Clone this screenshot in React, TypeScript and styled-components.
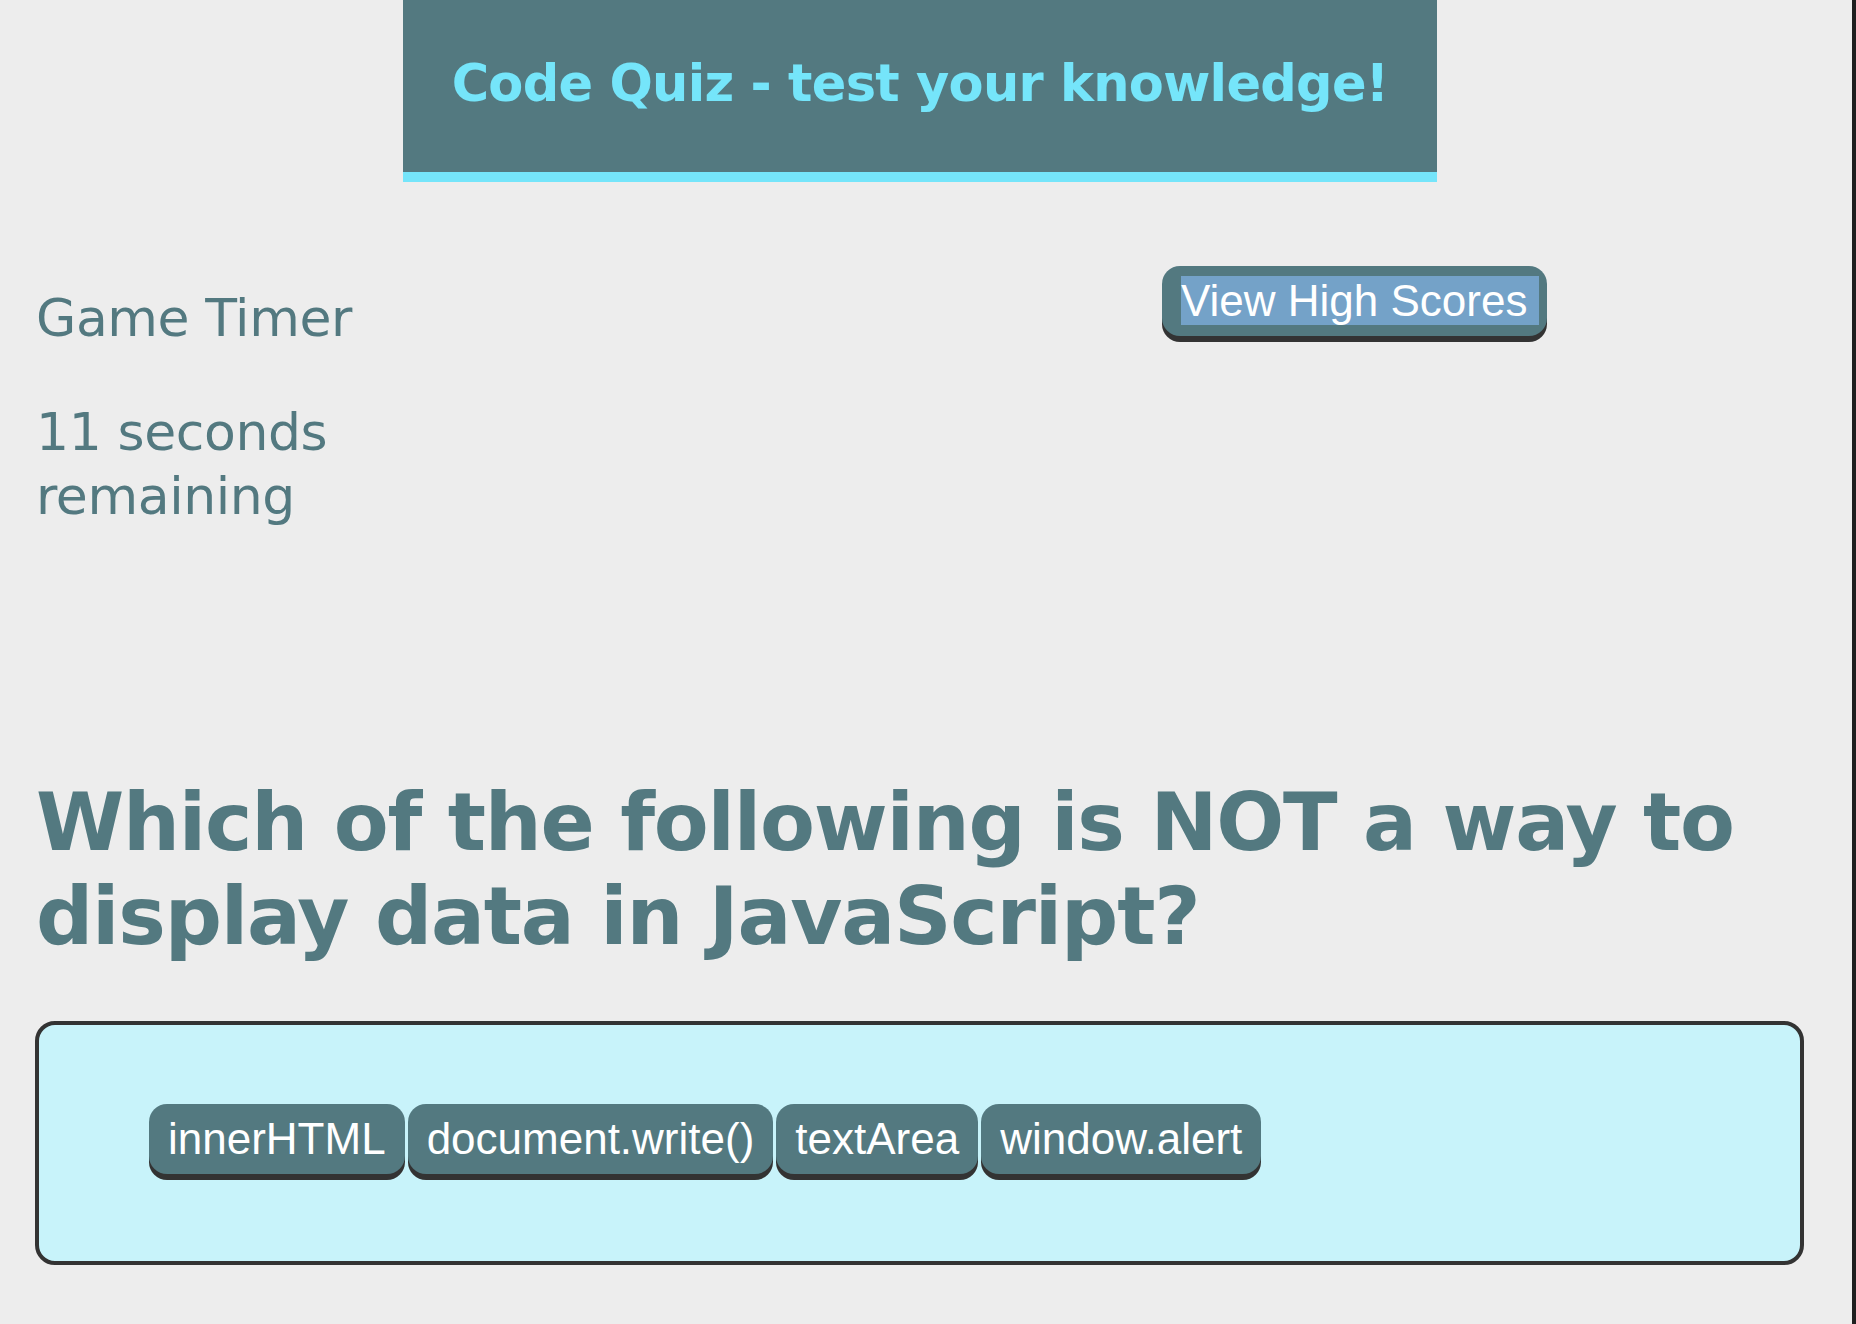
import React from "react";
import styled, { createGlobalStyle } from "styled-components";

const teal = "#537980";
const cyan = "#75e5fa";

const GlobalStyle = createGlobalStyle`
  html {
    background: linear-gradient(to right, #ededed calc(100% - 4px), #1f1f1f 0);
    min-height: 100%;
  }
  body {
    margin: 0;
    background: transparent;
    font-family: "DejaVu Sans", Verdana, sans-serif;
  }
`;

const Page = styled.div`
  width: 1840px;
  padding-bottom: 60px;
`;

const Header = styled.header`
  width: 1034px;
  height: 168px;
  margin: 0 auto;
  background: ${teal};
  border-bottom: 10px solid ${cyan};
  display: flex;
  align-items: center;
  justify-content: center;
  padding-bottom: 4px;
  box-sizing: content-box;
`;

const Title = styled.h1`
  margin: 0;
  color: ${cyan};
  font-family: "DejaVu Sans", Verdana, sans-serif;
  font-weight: bold;
  font-size: 51px;
  letter-spacing: -0.7px;
  line-height: 62px;
`;

const TopRow = styled.section`
  display: grid;
  grid-template-columns: 1126px auto;
  align-items: start;
  padding: 0 36px;
  margin-top: 84px;
`;

const TimerBox = styled.div`
  max-width: 460px;
  margin-top: 20px;
  color: ${teal};
`;

const TimerText = styled.p<{ spaced?: boolean }>`
  margin: ${props => (props.spaced ? "50px" : "0")} 0 0;
  font-size: 52px;
  letter-spacing: -0.4px;
  line-height: 64px;
`;

const Selection = styled.span`
  background: #74a2c8;
  padding-right: 12px;
`;

const PillButton = styled.button`
  font-family: "Liberation Sans", Arial, sans-serif;
  font-size: 44px;
  line-height: 50px;
  color: #fff;
  background: ${teal};
  border: 0;
  border-radius: 18px;
  box-shadow: 0 6px 0 #333;
  padding: 10px 19px;
  margin: 0;
  white-space: nowrap;
  cursor: pointer;
`;

const ScoresButton = styled(PillButton)`
  padding: 10px 8px 10px 19px;
  justify-self: start;
`;

const Question = styled.h2`
  margin: 248px 0 57px;
  padding: 0 36px;
  color: ${teal};
  font-family: "DejaVu Sans", Verdana, sans-serif;
  font-weight: bold;
  font-size: 80px;
  letter-spacing: -1.2px;
  line-height: 94px;
`;

const AnswerBox = styled.div`
  margin: 0 36px 0 35px;
  padding: 79px 40px 87px 110px;
  background: #c8f3fa;
  border: 4px solid #333;
  border-radius: 20px;
  display: flex;
  gap: 3px;
`;

const answers = ["innerHTML", "document.write()", "textArea", "window.alert"];

export default function App() {
  return (
    <Page>
      <GlobalStyle />
      <Header>
        <Title>Code Quiz - test your knowledge!</Title>
      </Header>
      <TopRow>
        <TimerBox>
          <TimerText>Game Timer</TimerText>
          <TimerText spaced>11 seconds remaining</TimerText>
        </TimerBox>
        <ScoresButton>
          <Selection>View High Scores</Selection>
        </ScoresButton>
      </TopRow>
      <Question>
        Which of the following is NOT a way to display data in JavaScript?
      </Question>
      <AnswerBox>
        {answers.map(answer => (
          <PillButton key={answer}>{answer}</PillButton>
        ))}
      </AnswerBox>
    </Page>
  );
}
